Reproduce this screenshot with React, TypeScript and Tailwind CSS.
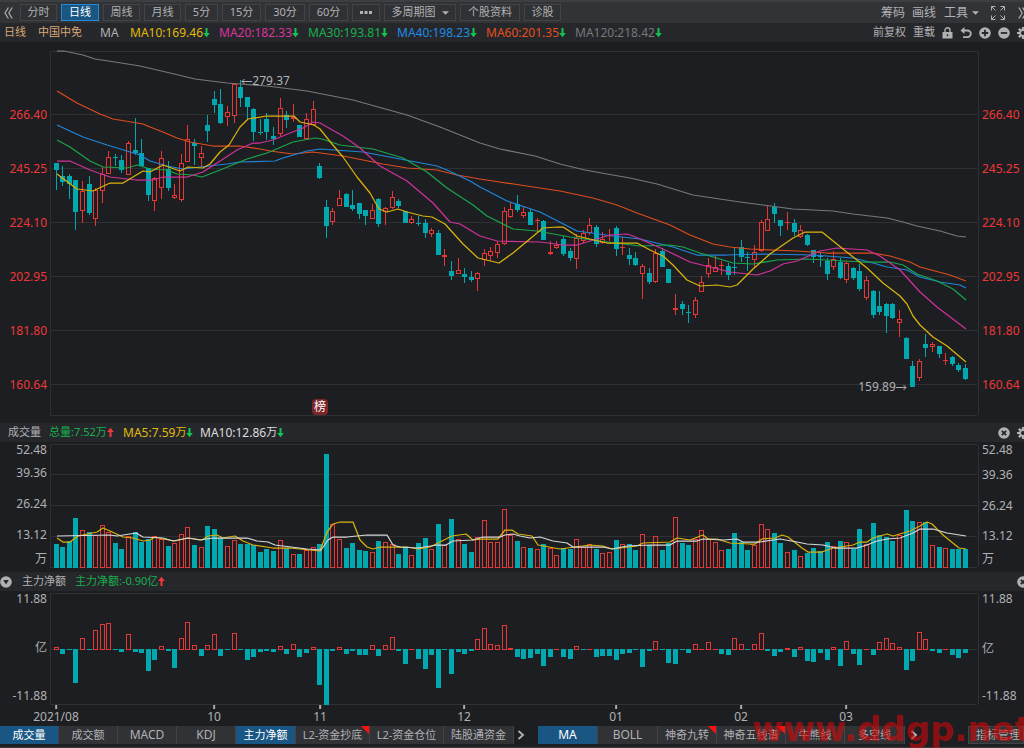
import React from 'react';

const STEP = 6.589;
const FIRST_X = 55.6;
const xAt = (i: number) => Math.round(FIRST_X + STEP * i);

const TEAL = '#00a8b0';
const RED = '#e63737';
const GRID = '#2f3034';

type Candle = { up: boolean; high: number; top: number; bottom: number; low: number };

/* direction, high, body top, body bottom, low */
const CANDLES: Candle[] = `
d 163 163 170 190;d 166 176 182 186;d 174 176 184 199;d 180 180 212 230;u 181 191 211 223;d 176 184 213 215;
u 188 190 219 226;u 167 174 191 203;u 151 157 174 174;d 154 157 158 166;d 155 160 170 173;u 141 143 175 175;
d 118 150 153 155;d 139 153 166 166;d 168 168 195 201;u 177 178 201 211;u 151 158 188 199;d 161 169 188 191;
u 184 195 198 199;u 154 163 200 202;u 125 139 162 162;d 139 143 146 165;u 146 153 158 167;d 115 125 131 142;
d 91 99 105 113;d 89 104 123 124;u 106 112 117 126;u 83 84 116 123;d 80 87 98 107;d 97 97 107 120;
d 108 109 132 141;d 119 132 133 135;d 113 119 132 140;d 127 136 139 145;u 98 108 134 136;d 111 115 120 128;
u 104 117 119 122;d 125 125 137 137;u 113 119 139 139;u 101 109 125 126;d 163 166 178 179;d 200 207 226 238;
u 208 211 222 225;u 190 198 206 206;d 193 194 207 207;d 190 205 209 211;d 203 203 214 219;d 210 210 216 225;
u 204 210 219 219;d 198 199 224 227;u 207 208 212 225;u 191 197 208 209;d 199 201 206 208;d 211 211 223 223;
u 216 219 223 224;d 216 223 224 226;d 219 223 233 238;u 228 230 234 237;d 230 233 255 255;u 249 255 257 266;
d 261 271 276 280;u 258 270 274 274;d 268 274 277 283;d 271 277 280 282;u 272 273 279 291;u 249 253 260 266;
u 247 251 256 261;u 241 244 253 258;u 207 211 244 245;u 203 209 217 218;d 195 204 210 212;u 206 212 216 218;
d 209 212 225 225;u 218 220 221 232;d 220 221 240 240;u 241 252 254 255;u 241 245 248 249;d 236 239 254 256;
d 248 251 258 261;u 234 238 259 269;u 230 233 241 243;u 218 225 233 235;d 225 227 244 247;u 232 239 243 244;
u 229 235 236 241;d 226 228 249 256;u 237 247 248 255;d 248 255 259 265;d 252 258 265 266;u 264 266 274 299;
d 268 273 282 284;u 249 253 282 283;d 248 251 267 267;d 269 269 283 283;u 294 308 310 315;d 301 304 309 315;
d 305 312 313 323;u 297 300 315 318;u 276 282 292 292;u 258 265 274 278;u 256 267 272 272;u 261 265 266 275;
d 263 266 275 280;d 247 267 268 275;d 240 247 257 262;d 252 257 258 271;u 245 252 260 267;u 220 222 251 252;
u 206 219 231 231;d 203 207 214 223;d 220 220 226 236;u 212 222 223 230;d 219 223 232 236;u 225 230 237 238;
d 234 235 245 246;d 250 250 257 263;d 252 256 257 267;d 258 261 274 280;u 251 259 267 270;d 258 262 278 279;
u 261 263 280 283;d 267 268 278 280;d 264 271 289 291;u 276 280 298 300;d 290 291 315 318;d 291 306 312 315;
d 303 304 316 333;d 303 304 318 319;u 310 319 323 337;d 337 338 359 359;d 361 366 387 387;u 359 361 378 381;
d 334 344 348 357;u 342 344 347 352;d 346 346 354 358;u 353 360 361 365;d 356 357 364 366;d 363 365 370 372;
d 364 368 379 380`
  .trim()
  .split(';')
  .map((row) => {
    const [dir, high, top, bottom, low] = row.trim().split(' ');
    return { up: dir === 'u', high: +high, top: +top, bottom: +bottom, low: +low };
  });

/* top edge of each volume bar */
const VOLUME: number[] = [
  544, 547, 541, 518, 530, 532, 535, 525, 532, 543, 549, 536, 532, 542, 539, 536, 539, 546, 543, 534, 527, 545, 547, 526,
  529, 538, 546, 540, 544, 544, 545, 552, 549, 551, 540, 548, 554, 554, 550, 547, 544, 454, 524, 539, 548, 543, 550, 551,
  552, 541, 542, 544, 554, 547, 555, 543, 538, 549, 524, 545, 519, 539, 544, 552, 537, 520, 542, 542, 509, 535, 541, 547,
  548, 549, 544, 548, 555, 548, 549, 539, 547, 544, 549, 553, 552, 540, 544, 544, 550, 534, 545, 536, 550, 543, 517, 543,
  545, 539, 530, 539, 542, 550, 549, 533, 542, 550, 545, 524, 529, 533, 543, 552, 550, 556, 553, 548, 551, 542, 546, 541,
  542, 549, 529, 544, 523, 535, 537, 541, 535, 510, 521, 522, 522, 545, 547, 548, 549, 549, 549,
];

/* signed height of each net-flow bar */
const FLOW: number[] = [
  2, -5, -1, -34, 11, -1, 19, 25, 26, -1, -3, 15, -3, -4, -22, -11, 3, -2, -19, 11, 27, 4, -7, 4, 15, -7, -1, 16, -1, -11,
  -8, -3, -2, -3, 3, -5, 5, -8, -4, 2, -36, -56, -2, 2, -5, -2, -6, -6, 4, -7, 4, 12, -2, -15, 0, -10, -20, -6, -39, -1,
  -25, -3, -5, -2, 10, 21, 5, 4, 24, 1, -8, -10, -9, -5, -17, -8, 0, -8, -10, 3, -1, 0, -8, -7, -7, -11, -5, -4, -1, -18,
  -2, 8, -1, -14, -15, -1, -4, 5, 0, 7, 0, -5, -6, 11, 5, -1, 5, 16, -2, -7, -3, 1, -8, 2, -12, -13, -4, -11, 2, -17, 8,
  -5, -16, 0, -6, 7, 11, 6, 2, -21, -12, 17, 10, -2, -4, 0, -6, -9, -4,
];

const PRICE_LINES: [string, string][] = [
  ['#77787c', '57,51 64,51 83,55 95,59 115,62 140,66 170,73 195,79 227,83 240,84 267,86 307,91 353,100 407,115 440,127 480,143 500,149 535,156 560,164 585,170 607,174 630,178 657,184 693,195 740,202 763,205 793,209 833,211 853,214 870,216 887,218 903,222 917,226 940,231 957,236 966,237'],
  ['#dd4c1c', '57,91 77,103 100,114 113,119 143,124 150,127 163,132 177,138 190,142 213,146 240,146 260,149 270,151 293,154 313,152 343,156 383,164 407,168 437,170 457,175 480,179 493,181 520,185 560,191 593,198 617,205 637,213 670,225 690,235 713,244 730,247 750,249 797,251 827,253 873,253 890,256 910,262 920,267 950,275 966,281'],
  ['#1f86dc', '57,125 83,137 107,145 117,148 140,155 150,161 167,166 183,169 200,167 227,164 240,162 275,161 283,158 307,151 320,149 363,152 400,159 437,166 447,170 470,181 480,187 507,201 540,212 577,231 613,236 640,239 673,247 697,255 727,255 763,254 813,255 853,258 873,263 887,267 907,270 920,277 940,282 960,285 966,288'],
  ['#18a54b', '57,140 70,147 90,161 103,167 127,168 137,165 150,169 167,170 177,174 193,175 202,177 220,170 247,159 267,153 293,142 315,138 322,139 340,145 373,149 403,158 427,172 447,188 473,205 487,216 513,229 537,231 570,237 607,242 640,246 670,245 683,247 700,253 733,263 753,264 777,260 807,259 863,262 890,262 903,265 917,274 937,281 953,289 966,300'],
  ['#cf329b', '57,161 70,161 90,170 110,177 127,179 137,180 153,180 163,177 187,177 203,172 217,163 237,150 253,143 260,143 273,140 290,133 303,128 313,122 320,123 343,136 360,148 380,166 407,181 433,203 450,222 460,224 480,236 497,241 540,242 563,245 577,245 610,235 627,234 633,236 663,249 690,262 730,272 757,275 770,271 783,264 797,261 820,251 837,248 867,250 880,256 900,270 920,292 937,307 966,329'],
  ['#d9b30c', '57,174 77,189 93,191 110,183 123,183 143,171 150,172 163,165 180,171 188,167 203,168 210,164 220,152 229,145 240,127 248,119 267,116 294,116 300,122 314,125 320,129 332,144 343,157 357,177 370,193 379,209 387,212 398,209 407,212 423,216 432,217 445,224 463,244 478,258 499,263 513,253 543,228 557,227 563,227 577,236 607,243 637,243 650,250 663,256 673,265 687,280 700,286 717,285 730,287 737,285 753,269 770,254 793,238 805,232 822,232 843,249 867,268 883,283 900,296 907,304 913,316 920,325 933,337 947,346 966,362'],
];

const VOLUME_LINES: [string, string][] = [
  ['#d9b30c', '57,538 63,542 70,542 78,536 97,532 103,528 110,531 123,537 133,538 143,541 150,540 155,537 163,539 175,541 188,538 202,540 208,536 217,535 223,538 235,536 243,541 253,545 273,548 290,548 320,551 327,532 333,524 340,522 353,522 360,540 367,547 373,549 380,547 407,547 418,549 430,547 440,542 452,536 466,534 473,540 483,539 498,539 505,530 512,530 518,534 532,536 538,545 560,549 590,545 603,546 612,549 637,546 643,543 670,542 677,538 690,540 703,535 708,539 717,539 730,543 750,544 755,544 762,539 775,538 782,535 788,537 802,548 808,552 822,552 833,548 853,545 860,542 867,542 873,538 887,534 893,536 910,531 920,526 927,522 932,524 943,535 959,548 966,549'],
  ['#d6d7d9', '57,536 110,535 117,536 136,533 143,537 163,538 173,541 188,538 200,540 213,538 247,538 257,541 268,542 275,545 307,549 321,550 328,540 333,537 347,537 367,535 387,535 393,545 400,547 418,548 437,545 446,545 453,541 473,540 483,537 500,537 505,535 513,534 520,536 530,538 540,537 553,541 567,543 573,547 603,547 612,549 627,546 650,545 670,545 677,541 697,541 703,539 723,540 737,539 743,542 760,542 780,539 797,542 807,544 823,545 835,548 857,548 867,545 877,541 887,539 900,538 913,533 920,529 933,529 947,533 966,536'],
];

const DATES = [
  { label: '2021/08', x: 56 },
  { label: '10', x: 214 },
  { label: '11', x: 320 },
  { label: '12', x: 464 },
  { label: '01', x: 616 },
  { label: '02', x: 741 },
  { label: '03', x: 846 },
];

function Arrow({ up = false }: { up?: boolean }) {
  return (
    <svg viewBox="0 0 7 11" className={`h-[11px] w-[7px] shrink-0 ${up ? 'rotate-180 text-[#f23a3a]' : 'text-[#12c456]'}`} aria-hidden="true">
      <path d="M2.5 1h2v5h2.300L3.500 10.300.2 6h2.300z" fill="currentColor" />
    </svg>
  );
}

function Gear() {
  return (
    <svg viewBox="0 0 12 12" className="h-3 w-3 shrink-0" aria-hidden="true">
      <g stroke="currentColor" strokeWidth="2.2">
        <path d="M6 0v12M0 6h12M1.8 1.8l8.4 8.4M10.2 1.8l-8.4 8.4" />
      </g>
      <circle cx="6" cy="6" r="3.9" fill="currentColor" />
      <circle cx="6" cy="6" r="2" fill="#26272b" />
    </svg>
  );
}

function DiscIcon({ d, filled = false }: { d: string; filled?: boolean }) {
  return (
    <svg viewBox="0 0 12 12" className="h-3 w-3 shrink-0" aria-hidden="true">
      <circle cx="6" cy="6" r="5.8" fill="currentColor" />
      <path d={d} stroke="#26272b" strokeWidth={filled ? 0 : 1.8} fill={filled ? '#26272b' : 'none'} />
    </svg>
  );
}
const CROSS = 'M3.8 3.8l4.4 4.4M8.2 3.8L3.8 8.2';

function Caret() {
  return (
    <svg viewBox="0 0 8 4" className="h-1 w-[7px] shrink-0" aria-hidden="true">
      <path d="M0 0h8L4 4z" fill="currentColor" />
    </svg>
  );
}

function Double({ flip = false }: { flip?: boolean }) {
  return (
    <svg viewBox="0 0 9 12" className={`h-3 w-[9px] shrink-0 ${flip ? 'rotate-180' : ''}`} aria-hidden="true">
      <path d="M4.4.5L1 6l3.4 5.5M8.2.5L4.8 6l3.4 5.5" stroke="currentColor" strokeWidth="1.2" fill="none" />
    </svg>
  );
}

function Dots() {
  return (
    <svg viewBox="0 0 12 3" className="h-[3px] w-3" aria-hidden="true">
      <path d="M0 0h3v3H0zM4.500 0h3v3h-3zM9 0h3v3H9z" fill="currentColor" />
    </svg>
  );
}

function Chevron() {
  return (
    <svg viewBox="0 0 8 10" className="h-[10px] w-2" aria-hidden="true">
      <path d="M1.5 1L6 5 1.5 9" stroke="currentColor" strokeWidth="1.9" fill="none" />
    </svg>
  );
}

const PERIODS: { label: string; width: string; active?: boolean }[] = [
  { label: '分时', width: 'w-[37px]' },
  { label: '日线', width: 'w-[38px]', active: true },
  { label: '周线', width: 'w-[37px]' },
  { label: '月线', width: 'w-[37px]' },
  { label: '5分', width: 'w-[33px]' },
  { label: '15分', width: 'w-[39px]' },
  { label: '30分', width: 'w-[40px]' },
  { label: '60分', width: 'w-[39px]' },
  { label: '更多', width: 'w-[28px]' },
  { label: '多周期图', width: 'w-[72px]' },
  { label: '个股资料', width: 'w-[60px]' },
  { label: '诊股', width: 'w-[37px]' },
];

function Toolbar() {
  return (
    <nav className="flex h-[23px] items-center justify-between overflow-hidden border-t-2 border-[#3d3e42] bg-[#323337] text-[11px]">
      <div className="flex items-center gap-1">
        <button aria-label="向左" className="flex w-4 justify-center">
          <Double />
        </button>
        {PERIODS.map((p) => (
          <button
            key={p.label}
            aria-label={p.label}
            className={`flex h-[17px] shrink-0 items-center justify-center gap-[6px] border ${p.width} ${
              p.active ? 'border-[#2389d8] bg-[#195683] text-white' : 'border-[#434448] bg-[#303135]'
            }`}
          >
            {p.label === '更多' ? <Dots /> : p.label}
            {p.label === '多周期图' && <Caret />}
          </button>
        ))}
      </div>
      <div className="-mr-[3px] flex shrink-0 items-center text-[12px]">
        <button className="mr-[7px]">筹码</button>
        <button className="mr-2">画线</button>
        <button className="mr-3 flex items-center gap-1">
          工具
          <Caret />
        </button>
        <button aria-label="全屏" className="mr-[13px]">
          <svg viewBox="0 0 14 14" className="h-[14px] w-[14px]" aria-hidden="true">
            <path d="M.5 4.5v-4h4M.5.5l4 4M9.500.5h4v4M13.5.5l-4 4M.5 9.500v4h4M.5 13.5l4-4M13.5 9.500v4h-4M13.5 13.5l-4-4" stroke="currentColor" fill="none" />
          </svg>
        </button>
        <button aria-label="向右">
          <Double flip />
        </button>
      </div>
    </nav>
  );
}

const AVERAGES = [
  { text: 'MA10:169.46', tone: 'text-[#e0ba0c]' },
  { text: 'MA20:182.33', tone: 'text-[#d9349f]' },
  { text: 'MA30:193.81', tone: 'text-[#16b04e]' },
  { text: 'MA40:198.23', tone: 'text-[#1f8ce6]' },
  { text: 'MA60:201.35', tone: 'text-[#e2501e]' },
  { text: 'MA120:218.42', tone: 'text-[#77787c]' },
];

function Legend() {
  return (
    <div className="flex h-[19px] items-center justify-between overflow-hidden bg-[#26272b] text-[12px]">
      <div className="flex items-center whitespace-nowrap pl-1">
        <span className="w-[34px] text-[11px] text-[#d8a777]">日线</span>
        <span className="w-[62px] text-[11px] text-[#d8a777]">中国中免</span>
        <span className="w-[30px]">MA</span>
        {AVERAGES.map((a) => (
          <span key={a.text} className={`flex min-w-[89px] items-center ${a.tone}`}>
            {a.text}
            <Arrow />
          </span>
        ))}
      </div>
      <div className="-mr-[5px] flex shrink-0 items-center gap-[7px] text-[11px]">
        <button>前复权</button>
        <button>重载</button>
        <button aria-label="锁定">
          <svg viewBox="0 0 11 12" className="h-3 w-[11px]" aria-hidden="true">
            <path d="M3 5.500V3.200a2.400 2.400 0 0 1 5 0v2.300" stroke="currentColor" strokeWidth="1.400" fill="none" />
            <path d="M.5 5h10v6.500H.5z" fill="currentColor" />
            <path d="M4.800 7.200h1.400v2H4.800z" fill="#26272b" />
          </svg>
        </button>
        <button aria-label="撤销">
          <svg viewBox="0 0 12 12" className="h-3 w-3" aria-hidden="true">
            <path d="M2 3.500h5.500a3.300 3.300 0 0 1 0 6.600H3" stroke="currentColor" strokeWidth="1.800" fill="none" />
            <path d="M4.500 0v7L.5 3.500z" fill="currentColor" />
          </svg>
        </button>
        <button aria-label="放大">
          <DiscIcon d="M6 2.800v6.400M2.800 6h6.400" />
        </button>
        <button aria-label="缩小">
          <DiscIcon d="M2.800 6h6.400" />
        </button>
        <button aria-label="设置">
          <Gear />
        </button>
      </div>
    </div>
  );
}

function HLine({ y }: { y: number }) {
  return <path d={`M50 ${y + 0.5}H977`} stroke={GRID} />;
}

function Frame({ top, bottom }: { top: number; bottom: number }) {
  return (
    <g>
      <HLine y={top} />
      <HLine y={bottom} />
      <path d={`M50.5 ${top}V${bottom + 1}M978.5 ${top}V${bottom}`} stroke={GRID} />
    </g>
  );
}

function Lines({ lines }: { lines: [string, string][] }) {
  return (
    <g fill="none" strokeWidth="1.250" strokeLinejoin="round">
      {lines.map(([color, points]) => (
        <polyline key={points} points={points} stroke={color} />
      ))}
    </g>
  );
}

function Bar({ i, top, bottom, up }: { i: number; top: number; bottom: number; up: boolean }) {
  const x = xAt(i) - 2;
  const h = Math.max(bottom - top, 1);
  return up && h > 2 ? (
    <rect x={x + 0.5} y={top + 0.5} width={4} height={h - 1} fill="#1d1e21" stroke={RED} />
  ) : (
    <rect x={x} y={top} width={5} height={h} fill={up ? RED : TEAL} />
  );
}

const priceLabels = ['266.40', '245.25', '224.10', '202.95', '181.80', '160.64'];

function PriceAxis({ side }: { side: string }) {
  return (
    <div className={`flex flex-col pt-[46px] text-[#ee3838] ${side}`}>
      {priceLabels.map((l) => (
        <span key={l} className="flex h-[54px] items-center">
          {l}
        </span>
      ))}
    </div>
  );
}

function GridAxis({ labels, className }: { labels: string[]; className: string }) {
  return (
    <div className={`grid items-center leading-none ${className}`}>
      {labels.map((l) => (
        <span key={l}>{l}</span>
      ))}
    </div>
  );
}

const ROW = 'grid grid-cols-[50px_minmax(0,1fr)_45px] text-[12px]';
const LEFT = 'items-end pr-[3px]';
const RIGHT = 'items-start pl-[3px]';

function PricePanel() {
  return (
    <section aria-label="K线图" className={ROW}>
      <PriceAxis side={LEFT} />
      <div className="relative">
        <svg viewBox="50 42 929 381" preserveAspectRatio="none" className="block h-[381px] w-full">
          <Frame top={51} bottom={415} />
          {[114, 168, 222, 276, 330, 384].map((y) => (
            <HLine key={y} y={y} />
          ))}
          {CANDLES.map((c, i) => (
            <g key={i}>
              <rect x={xAt(i)} y={c.high} width={1} height={Math.max(c.low - c.high, 1)} fill={c.up ? RED : TEAL} />
              <Bar i={i} top={c.top} bottom={c.bottom} up={c.up} />
            </g>
          ))}
          <Lines lines={PRICE_LINES} />
        </svg>
        <span className="absolute top-[31px] left-[20.6%] flex items-center leading-4">
          <svg viewBox="0 0 11 7" className="h-[7px] w-[11px]" aria-hidden="true">
            <path d="M11 3.500H1M3.500 1L1 3.500 3.500 6" stroke="currentColor" fill="none" />
          </svg>
          279.37
        </span>
        <span className="absolute top-[337px] left-[87%] flex items-center leading-4">
          159.89
          <svg viewBox="0 0 11 7" className="h-[7px] w-[11px]" aria-hidden="true">
            <path d="M0 3.500h10M7.500 1L10 3.500 7.500 6" stroke="currentColor" fill="none" />
          </svg>
        </span>
        <span className="absolute top-[357px] left-[28.2%] flex h-4 w-4 items-center justify-center rounded-sm bg-[#7c2629] text-[12px] text-white">
          榜
        </span>
      </div>
      <PriceAxis side={RIGHT} />
    </section>
  );
}

function PanelHeader({ children, actions }: { children: React.ReactNode; actions: React.ReactNode }) {
  return (
    <header className="flex h-[19px] items-center justify-between overflow-hidden bg-[#26272b] text-[11px]">
      <div className="flex items-center whitespace-nowrap">{children}</div>
      <div className="-mr-[5px] flex shrink-0 items-center gap-[7px]">{actions}</div>
    </header>
  );
}

function VolumePanel() {
  return (
    <section aria-label="成交量">
      <PanelHeader
        actions={
          <>
            <button aria-label="关闭成交量">
              <DiscIcon d={CROSS} />
            </button>
            <button aria-label="成交量设置">
              <Gear />
            </button>
          </>
        }
      >
        <span className="w-[49px] pl-2">成交量</span>
        <span className="flex w-[74px] items-center text-[#16b04e]">
          总量:7.52万
          <Arrow up />
        </span>
        <span className="flex w-[77px] items-center text-[#e0ba0c]">
          <span className="text-[12px]">MA5:7.59</span>万<Arrow />
        </span>
        <span className="flex items-center text-[#dcdddf]">
          <span className="text-[12px]">MA10:12.86</span>万<Arrow />
        </span>
      </PanelHeader>
      <div className={ROW}>
        <GridAxis
          labels={['52.48', '39.36', '26.24', '13.12', '万']}
          className="grid-rows-[16px_30px_31px_31px_18px] content-start justify-items-end pr-[3px]"
        />
        <svg viewBox="50 442 929 130" preserveAspectRatio="none" className="block h-[130px] w-full">
          <Frame top={444} bottom={567} />
          {[474, 505, 536].map((y) => (
            <HLine key={y} y={y} />
          ))}
          {VOLUME.map((top, i) => (
            <Bar key={i} i={i} top={top} bottom={568} up={CANDLES[i].up} />
          ))}
          <Lines lines={VOLUME_LINES} />
        </svg>
        <GridAxis
          labels={['52.48', '39.36', '26.24', '13.12', '万']}
          className="grid-rows-[16px_34px_28px_32px_14px] content-start justify-items-start pl-[3px]"
        />
      </div>
    </section>
  );
}

function FlowPanel() {
  return (
    <section aria-label="主力净额">
      <PanelHeader
        actions={
          <button aria-label="关闭主力净额">
            <DiscIcon d={CROSS} />
          </button>
        }
      >
        <button aria-label="收起" className="w-[22px]">
          <DiscIcon d="M3.200 4h5.600L6 8.500z" filled />
        </button>
        <span className="w-[53px]">主力净额</span>
        <span className="flex items-center text-[#16b04e]">
          主力净额:-0.90亿
          <Arrow up />
        </span>
      </PanelHeader>
      <div className={ROW}>
        <GridAxis
          labels={['11.88', '亿', '-11.88']}
          className="grid-rows-[16px_82px_14px] content-start justify-items-end pr-[3px]"
        />
        <svg viewBox="50 591 929 114" preserveAspectRatio="none" className="block h-[114px] w-full">
          <Frame top={593} bottom={704} />
          <HLine y={649} />
          {FLOW.map((v, i) =>
            v < 0 ? (
              <Bar key={i} i={i} top={649} bottom={649 - v} up={false} />
            ) : (
              <Bar key={i} i={i} top={649 - v} bottom={650} up />
            ),
          )}
        </svg>
        <GridAxis
          labels={['11.88', '亿', '-11.88']}
          className="grid-rows-[16px_84px_10px] content-start justify-items-start pl-[3px]"
        />
      </div>
      <div className={ROW}>
        <div className="relative col-start-2 h-[21px]">
          {DATES.map((d) => (
            <span
              key={d.label}
              className="absolute top-0 flex -translate-x-1/2 flex-col items-center leading-[16px]"
              style={{ left: `${((d.x - 50) / 929) * 100}%` }}
            >
              <span className="h-1 w-0.5 bg-[#a9aaad]" />
              {d.label}
            </span>
          ))}
        </div>
      </div>
    </section>
  );
}

type Tab = { label: string; width: string; active?: boolean; mark?: boolean };

const INDICATOR_TABS: Tab[] = [
  { label: '成交量', width: 'w-[59px]', active: true },
  { label: '成交额', width: 'w-[59px]' },
  { label: 'MACD', width: 'w-[59px]' },
  { label: 'KDJ', width: 'w-[59px]' },
  { label: '主力净额', width: 'w-[60px]', active: true },
  { label: 'L2-资金抄底', width: 'w-[74px]', mark: true },
  { label: 'L2-资金仓位', width: 'w-[74px]' },
  { label: '陆股通资金', width: 'w-[70px]' },
];

const OVERLAY_TABS: Tab[] = [
  { label: 'MA', width: 'w-[60px]', active: true },
  { label: 'BOLL', width: 'w-[60px]' },
  { label: '神奇九转', width: 'w-[59px]', mark: true },
  { label: '神奇五线谱', width: 'w-[69px]', mark: true },
  { label: '牛熊线', width: 'w-[59px]' },
  { label: '多空线', width: 'w-[60px]' },
];

function TabStrip({ tabs }: { tabs: Tab[] }) {
  return (
    <div className="flex">
      {tabs.map((t) => (
        <button
          key={t.label}
          className={`relative h-[18px] shrink-0 border-r border-[#424347] whitespace-nowrap ${t.width} ${
            t.active ? 'bg-[#195683] text-white' : 'bg-[#313236]'
          } ${/^[A-Z]+$/.test(t.label) ? 'text-[12px]' : 'text-[11px]'}`}
        >
          {t.label}
          {t.mark && (
            <svg viewBox="0 0 8 8" className="absolute top-0 right-0 h-2 w-2" aria-hidden="true">
              <path d="M0 0h8v8z" fill="#ff1010" />
            </svg>
          )}
        </button>
      ))}
    </div>
  );
}

function BottomTabs() {
  return (
    <footer className="relative flex h-[22px] items-start justify-between border-b border-[#3a3b3f]">
      <div className="flex items-center">
        <TabStrip tabs={INDICATOR_TABS} />
        <button aria-label="更多指标" className="mr-3 ml-[2px] px-px">
          <Chevron />
        </button>
        <TabStrip tabs={OVERLAY_TABS} />
        <button aria-label="更多叠加" className="ml-1 px-px">
          <Chevron />
        </button>
      </div>
      <button className="h-[18px] w-14 shrink-0 border border-[#424347] bg-[#313236] pl-1 text-[11px] whitespace-nowrap">
        指标管理
      </button>
      <div className="pointer-events-none absolute right-0 -bottom-0.5 h-10 w-[272px] overflow-hidden font-['DejaVu_Sans',sans-serif] text-[34px] leading-10 font-bold whitespace-nowrap text-[#d40808]/60">
        www.ddgp.net
      </div>
    </footer>
  );
}

export default function App() {
  return (
    <main className="min-h-screen w-full overflow-hidden bg-[#1d1e21] font-['Noto_Sans','Noto_Sans_CJK_SC',sans-serif] text-[#b0b1b4]">
      <Toolbar />
      <Legend />
      <PricePanel />
      <VolumePanel />
      <FlowPanel />
      <BottomTabs />
    </main>
  );
}
